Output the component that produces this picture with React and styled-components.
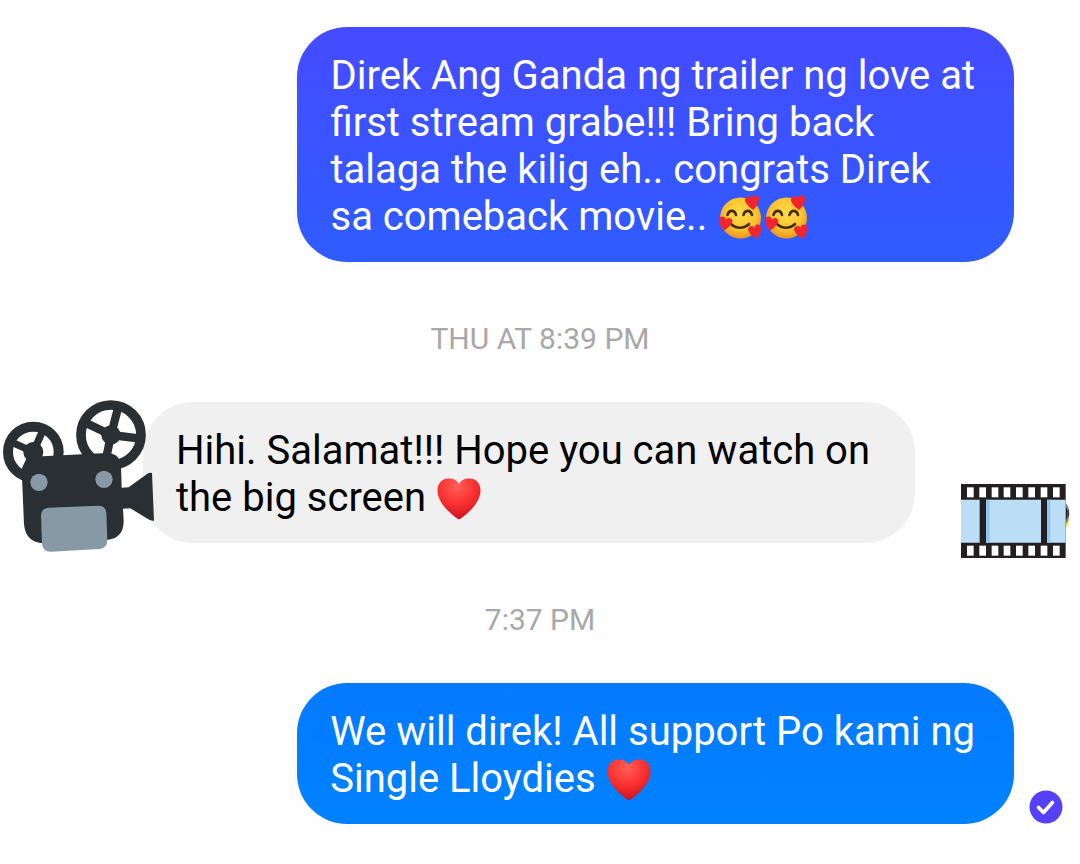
import React from 'react';
import styled, { createGlobalStyle } from 'styled-components';

const GlobalStyle = createGlobalStyle`
  body {
    margin: 0;
    background: #fefefe;
    font-family: Roboto, 'Liberation Sans', sans-serif;
  }
`;

const Conversation = styled.main`
  padding: 27px 0 40px;
`;

const Row = styled.div`
  position: relative;
  display: flex;
  align-items: flex-end;
  justify-content: ${({ $own }) => ($own ? 'flex-end' : 'space-between')};
  padding: ${({ $own }) => ($own ? '0 17px 0 120px' : '0 10px 0 143px')};
`;

const Bubble = styled.p`
  box-sizing: border-box;
  margin: 0;
  padding: 25px ${({ $endPadding }) => $endPadding || 39}px 22px 33px;
  border-radius: 50px;
  font-size: 40px;
  line-height: 47px;
  color: ${({ $color }) => $color || '#fff'};
  background: ${({ $background }) => $background};
`;

const Gutter = styled.div`
  flex: 0 0 49px;
  display: flex;
  justify-content: flex-end;
`;

const Timestamp = styled.time`
  display: block;
  padding: 59px 0 45px;
  font-size: 30px;
  line-height: 36px;
  text-align: center;
  text-transform: uppercase;
  color: #a8a8a8;
`;

// the negative margin keeps a line with emoji as tall as the others
const Emoji = styled.svg`
  width: 46px;
  height: 46px;
  margin: -4px 0;
  vertical-align: -7px;
`;

// the camera lies over the start of the received bubble
const CameraSticker = styled.svg`
  position: absolute;
  top: -3px;
  left: 0;
  width: 157px;
  height: 155px;
`;

const FilmSticker = styled.svg`
  flex: 0 0 109px;
  height: 74px;
  margin-bottom: -15px;
`;

const StatusIcon = styled.svg`
  width: 34px;
  height: 34px;
`;

function Heart() {
  return (
    <Emoji viewBox="0 0 46 46" role="img" aria-label="red heart">
      <defs>
        <radialGradient id="heart" cx="0.45" cy="0.2" r="0.8">
          <stop offset="0" stopColor="#ff6058" />
          <stop offset="0.55" stopColor="#fa2f2f" />
          <stop offset="1" stopColor="#c81420" />
        </radialGradient>
      </defs>
      <path
        d="M23 43.500C20 42 1.500 29 1.500 14.500C1.500 7 6.500 2.500 12.500 2.500C17.500 2.500 21.500 4.500 23 8C24.500 4.500 28.500 2.500 33.500 2.500C39.500 2.500 44.500 7 44.500 14.500C44.500 29 26 42 23 43.500Z"
        fill="url(#heart)"
      />
    </Emoji>
  );
}

const smallHeart =
  'M0 6C-2 5-7-1-6-4C-5-7-1-7 0-4C1-7 5-7 6-4C7-1 2 5 0 6Z';

function LovingFace() {
  return (
    <Emoji viewBox="0 0 46 46" role="img" aria-label="smiling face with hearts">
      <defs>
        <radialGradient id="face" cx="0.5" cy="0.4" r="0.62">
          <stop offset="0" stopColor="#ffdb4d" />
          <stop offset="0.6" stopColor="#fdc52f" />
          <stop offset="1" stopColor="#ea8f20" />
        </radialGradient>
      </defs>
      <circle cx="23.500" cy="23" r="20.500" fill="url(#face)" />
      <g fill="none" stroke="#422b0d" strokeWidth="2.600" strokeLinecap="round">
        <path d="M10.500 20C12 14.500 17.500 14.500 19 20" />
        <path d="M26.500 20C28 14.500 33.500 14.500 35 20" />
        <path d="M14 29C19 34 27 34 32 29" />
      </g>
      <g fill="#f0252f">
        <path d={smallHeart} transform="translate(35.500 8) rotate(-8) scale(1.15)" />
        <path d={smallHeart} transform="translate(8 29) rotate(12) scale(1.1)" />
        <path d={smallHeart} transform="translate(38.500 37) rotate(-14) scale(1.1)" />
      </g>
    </Emoji>
  );
}

function MovieCamera() {
  return (
    <CameraSticker viewBox="0 25 471 465" role="img" aria-label="movie camera">
      <g fill="none" stroke="#292f33">
        <circle cx="333" cy="133" r="90" strokeWidth="29" />
        <circle cx="100" cy="184" r="76" strokeWidth="30" />
        <path d="M333 133L354 52M333 133L252 94M333 133L416 143M333 133L316 214" strokeWidth="25" />
        <path d="M100 184L128 120M100 184L34 154M100 184L70 250" strokeWidth="22" />
      </g>
      <g fill="#292f33">
        <circle cx="333" cy="133" r="29" />
        <circle cx="100" cy="184" r="30" />
        <path d="M128 197L320 187Q361 188 363 228L365 291L386 290L441 250Q448 245 456 247L462 390Q452 391 445 386L391 353L369 354L371 390Q372 443 320 448L130 458Q76 455 72 400L66 262Q66 201 128 197Z" />
      </g>
      <g fill="#8899a6">
        <circle cx="117" cy="275" r="26" />
        <circle cx="312" cy="266" r="26" />
        <path d="M146 351L294 345Q318 345 319 368L322 447Q322 473 298 475L152 483Q128 483 126 460L123 376Q123 353 146 351Z" />
      </g>
    </CameraSticker>
  );
}

function FilmFrames() {
  const holes = [80, 117, 154, 190, 227, 264, 301, 338];
  return (
    <FilmSticker viewBox="62 40 327 222" role="img" aria-label="film frames">
      <ellipse cx="370" cy="139" rx="17" ry="35" fill="#f4e23c" />
      <ellipse cx="369" cy="129" rx="18" ry="34" fill="#7d8588" />
      <path d="M378 112V146M383 118V138" stroke="#222" strokeWidth="4" />
      <path fill="#231f20" d="M62 40H376V262H62Z" />
      <path fill="#bbddf5" d="M62 87H118V216H62ZM137 87H302V216H137ZM320 87H376V216H320Z" />
      <path fill="#8fc6ef" d="M137 87H148V216H137ZM320 87H330V216H320Z" />
      {holes.map((x) => (
        <g key={x} fill="#fff">
          <rect x={x} y="50" width="20" height="30" />
          <rect x={x} y="225" width="20" height="30" />
        </g>
      ))}
    </FilmSticker>
  );
}

function Delivered() {
  return (
    <StatusIcon viewBox="0 0 34 34" role="img" aria-label="Delivered">
      <circle cx="17" cy="17" r="16.500" fill="#5540f5" />
      <path
        d="M9.500 17.500L14.500 22.500L23.500 12.500"
        fill="none"
        stroke="#fff"
        strokeWidth="3.600"
        strokeLinecap="round"
        strokeLinejoin="round"
      />
    </StatusIcon>
  );
}

function App() {
  return (
    <>
      <GlobalStyle />
      <Conversation>
        <Row $own>
          <Bubble $background="linear-gradient(#454bff, #2e5cff)">
            Direk Ang Ganda ng trailer ng love at
            <br />
            first stream grabe!!! Bring back
            <br />
            talaga the kilig eh.. congrats Direk
            <br />
            sa comeback movie.. <LovingFace />
            <LovingFace />
          </Bubble>
          <Gutter />
        </Row>
        <Timestamp>Thu at 8:39 PM</Timestamp>
        <Row>
          <Bubble $background="#f0f0f0" $color="#000" $endPadding={45}>
            Hihi. Salamat!!! Hope you can watch on
            <br />
            the big screen <Heart />
          </Bubble>
          <MovieCamera />
          <FilmFrames />
        </Row>
        <Timestamp>7:37 PM</Timestamp>
        <Row $own>
          <Bubble $background="linear-gradient(#057aff, #0082ff)">
            We will direk! All support Po kami ng
            <br />
            Single Lloydies <Heart />
          </Bubble>
          <Gutter>
            <Delivered />
          </Gutter>
        </Row>
      </Conversation>
    </>
  );
}

export default App;
